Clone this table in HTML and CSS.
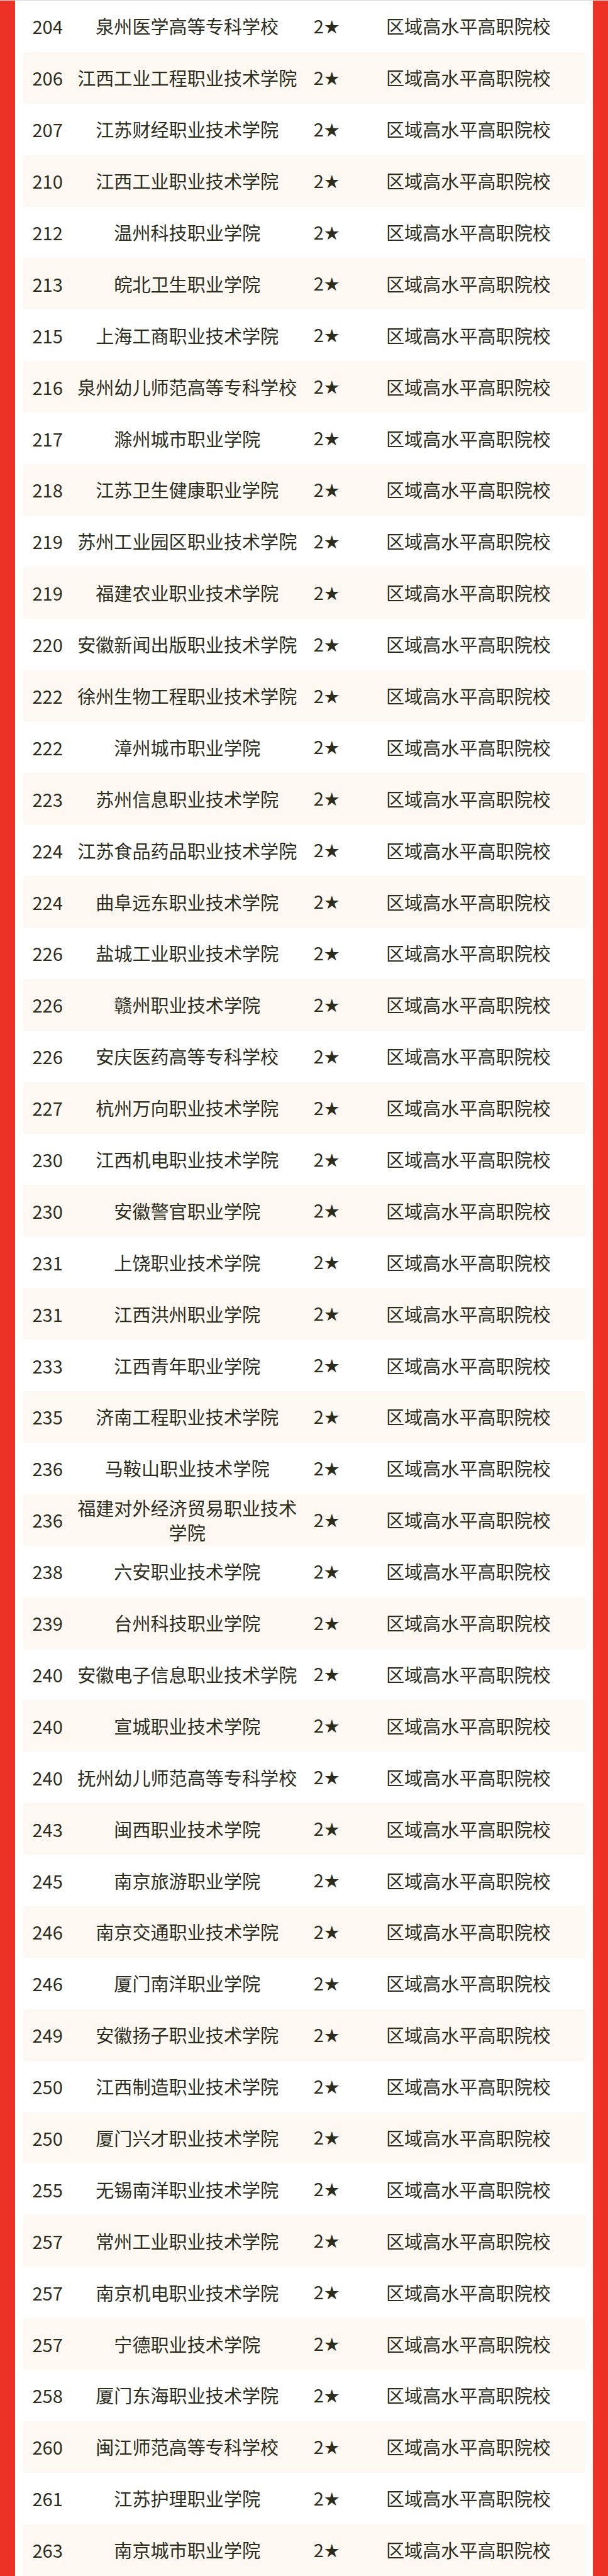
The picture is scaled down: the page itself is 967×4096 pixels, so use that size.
FILE: index.html
```html
<!DOCTYPE html>
<html lang="zh-CN">
<head>
<meta charset="utf-8">
<title>区域高水平高职院校</title>
<link rel="stylesheet" href="styles.css">
</head>
<body>
<div class="frame">
  <div class="inner">
    <table class="rank">
      <colgroup>
        <col class="c-no"><col class="c-name"><col class="c-star"><col class="c-type">
      </colgroup>
      <tbody>
        <tr><td>204</td><td>泉州医学高等专科学校</td><td>2<span class="star">★</span></td><td>区域高水平高职院校</td></tr>
        <tr><td>206</td><td>江西工业工程职业技术学院</td><td>2<span class="star">★</span></td><td>区域高水平高职院校</td></tr>
        <tr><td>207</td><td>江苏财经职业技术学院</td><td>2<span class="star">★</span></td><td>区域高水平高职院校</td></tr>
        <tr><td>210</td><td>江西工业职业技术学院</td><td>2<span class="star">★</span></td><td>区域高水平高职院校</td></tr>
        <tr><td>212</td><td>温州科技职业学院</td><td>2<span class="star">★</span></td><td>区域高水平高职院校</td></tr>
        <tr><td>213</td><td>皖北卫生职业学院</td><td>2<span class="star">★</span></td><td>区域高水平高职院校</td></tr>
        <tr><td>215</td><td>上海工商职业技术学院</td><td>2<span class="star">★</span></td><td>区域高水平高职院校</td></tr>
        <tr><td>216</td><td>泉州幼儿师范高等专科学校</td><td>2<span class="star">★</span></td><td>区域高水平高职院校</td></tr>
        <tr><td>217</td><td>滁州城市职业学院</td><td>2<span class="star">★</span></td><td>区域高水平高职院校</td></tr>
        <tr><td>218</td><td>江苏卫生健康职业学院</td><td>2<span class="star">★</span></td><td>区域高水平高职院校</td></tr>
        <tr><td>219</td><td>苏州工业园区职业技术学院</td><td>2<span class="star">★</span></td><td>区域高水平高职院校</td></tr>
        <tr><td>219</td><td>福建农业职业技术学院</td><td>2<span class="star">★</span></td><td>区域高水平高职院校</td></tr>
        <tr><td>220</td><td>安徽新闻出版职业技术学院</td><td>2<span class="star">★</span></td><td>区域高水平高职院校</td></tr>
        <tr><td>222</td><td>徐州生物工程职业技术学院</td><td>2<span class="star">★</span></td><td>区域高水平高职院校</td></tr>
        <tr><td>222</td><td>漳州城市职业学院</td><td>2<span class="star">★</span></td><td>区域高水平高职院校</td></tr>
        <tr><td>223</td><td>苏州信息职业技术学院</td><td>2<span class="star">★</span></td><td>区域高水平高职院校</td></tr>
        <tr><td>224</td><td>江苏食品药品职业技术学院</td><td>2<span class="star">★</span></td><td>区域高水平高职院校</td></tr>
        <tr><td>224</td><td>曲阜远东职业技术学院</td><td>2<span class="star">★</span></td><td>区域高水平高职院校</td></tr>
        <tr><td>226</td><td>盐城工业职业技术学院</td><td>2<span class="star">★</span></td><td>区域高水平高职院校</td></tr>
        <tr><td>226</td><td>赣州职业技术学院</td><td>2<span class="star">★</span></td><td>区域高水平高职院校</td></tr>
        <tr><td>226</td><td>安庆医药高等专科学校</td><td>2<span class="star">★</span></td><td>区域高水平高职院校</td></tr>
        <tr><td>227</td><td>杭州万向职业技术学院</td><td>2<span class="star">★</span></td><td>区域高水平高职院校</td></tr>
        <tr><td>230</td><td>江西机电职业技术学院</td><td>2<span class="star">★</span></td><td>区域高水平高职院校</td></tr>
        <tr><td>230</td><td>安徽警官职业学院</td><td>2<span class="star">★</span></td><td>区域高水平高职院校</td></tr>
        <tr><td>231</td><td>上饶职业技术学院</td><td>2<span class="star">★</span></td><td>区域高水平高职院校</td></tr>
        <tr><td>231</td><td>江西洪州职业学院</td><td>2<span class="star">★</span></td><td>区域高水平高职院校</td></tr>
        <tr><td>233</td><td>江西青年职业学院</td><td>2<span class="star">★</span></td><td>区域高水平高职院校</td></tr>
        <tr><td>235</td><td>济南工程职业技术学院</td><td>2<span class="star">★</span></td><td>区域高水平高职院校</td></tr>
        <tr><td>236</td><td>马鞍山职业技术学院</td><td>2<span class="star">★</span></td><td>区域高水平高职院校</td></tr>
        <tr><td>236</td><td>福建对外经济贸易职业技术学院</td><td>2<span class="star">★</span></td><td>区域高水平高职院校</td></tr>
        <tr><td>238</td><td>六安职业技术学院</td><td>2<span class="star">★</span></td><td>区域高水平高职院校</td></tr>
        <tr><td>239</td><td>台州科技职业学院</td><td>2<span class="star">★</span></td><td>区域高水平高职院校</td></tr>
        <tr><td>240</td><td>安徽电子信息职业技术学院</td><td>2<span class="star">★</span></td><td>区域高水平高职院校</td></tr>
        <tr><td>240</td><td>宣城职业技术学院</td><td>2<span class="star">★</span></td><td>区域高水平高职院校</td></tr>
        <tr><td>240</td><td>抚州幼儿师范高等专科学校</td><td>2<span class="star">★</span></td><td>区域高水平高职院校</td></tr>
        <tr><td>243</td><td>闽西职业技术学院</td><td>2<span class="star">★</span></td><td>区域高水平高职院校</td></tr>
        <tr><td>245</td><td>南京旅游职业学院</td><td>2<span class="star">★</span></td><td>区域高水平高职院校</td></tr>
        <tr><td>246</td><td>南京交通职业技术学院</td><td>2<span class="star">★</span></td><td>区域高水平高职院校</td></tr>
        <tr><td>246</td><td>厦门南洋职业学院</td><td>2<span class="star">★</span></td><td>区域高水平高职院校</td></tr>
        <tr><td>249</td><td>安徽扬子职业技术学院</td><td>2<span class="star">★</span></td><td>区域高水平高职院校</td></tr>
        <tr><td>250</td><td>江西制造职业技术学院</td><td>2<span class="star">★</span></td><td>区域高水平高职院校</td></tr>
        <tr><td>250</td><td>厦门兴才职业技术学院</td><td>2<span class="star">★</span></td><td>区域高水平高职院校</td></tr>
        <tr><td>255</td><td>无锡南洋职业技术学院</td><td>2<span class="star">★</span></td><td>区域高水平高职院校</td></tr>
        <tr><td>257</td><td>常州工业职业技术学院</td><td>2<span class="star">★</span></td><td>区域高水平高职院校</td></tr>
        <tr><td>257</td><td>南京机电职业技术学院</td><td>2<span class="star">★</span></td><td>区域高水平高职院校</td></tr>
        <tr><td>257</td><td>宁德职业技术学院</td><td>2<span class="star">★</span></td><td>区域高水平高职院校</td></tr>
        <tr><td>258</td><td>厦门东海职业技术学院</td><td>2<span class="star">★</span></td><td>区域高水平高职院校</td></tr>
        <tr><td>260</td><td>闽江师范高等专科学校</td><td>2<span class="star">★</span></td><td>区域高水平高职院校</td></tr>
        <tr><td>261</td><td>江苏护理职业学院</td><td>2<span class="star">★</span></td><td>区域高水平高职院校</td></tr>
        <tr><td>263</td><td>南京城市职业学院</td><td>2<span class="star">★</span></td><td>区域高水平高职院校</td></tr>
      </tbody>
    </table>
  </div>
</div>
</body>
</html>
```

FILE: styles.css
```css
html, body {
  margin: 0;
  padding: 0;
  background: #ffffff;
}

.frame {
  border-top: 1px solid #d8d8d8;
  background: #ec3127;
  padding: 0 24px;
}

.inner {
  background: #ffffff;
  padding: 0 12px 0 12.5px;
}

.rank {
  width: 100%;
  border-collapse: collapse;
  table-layout: fixed;
  font-family: "Noto Sans CJK SC", "Noto Sans", sans-serif;
  font-size: 29.1px;
  line-height: 39px;
  color: #2c2c1c;
}

.c-no { width: 78.3px; }
.c-name { width: 365.8px; }
.c-star { width: 78.3px; }
.c-type { width: auto; }

.rank tr {
  height: 81.9px;
}

.rank tr:nth-child(even) {
  background: #fdf8f1;
}

.rank td {
  padding: 0;
  text-align: center;
  vertical-align: middle;
}

.star {
  font-family: "DejaVu Sans", sans-serif;
  font-size: 29px;
}
```
